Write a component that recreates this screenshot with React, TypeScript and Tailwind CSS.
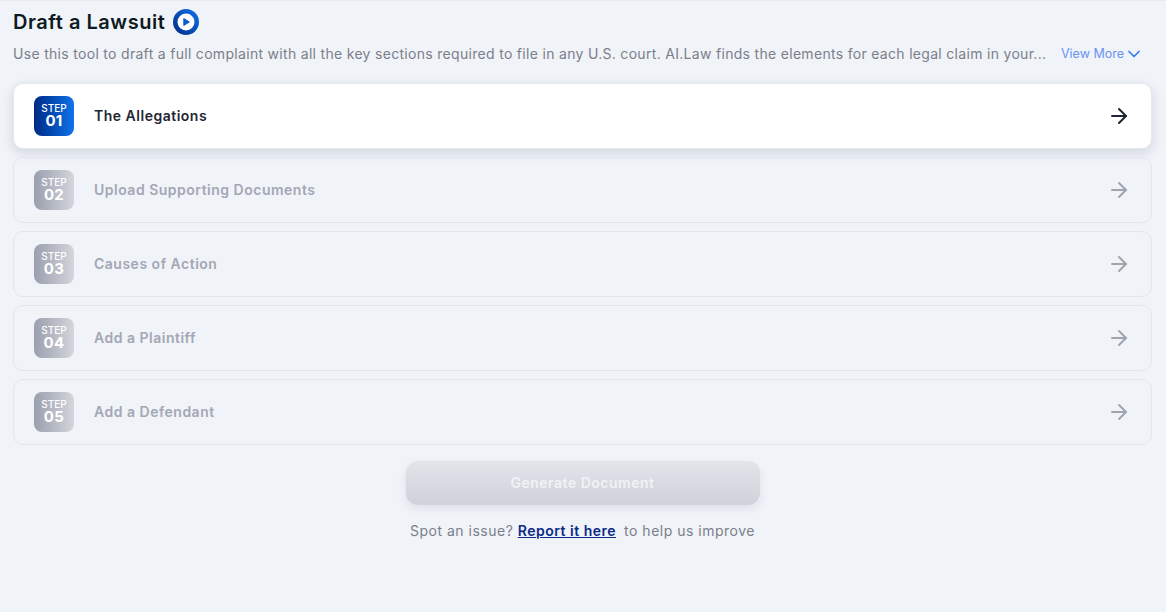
import { ArrowRight, ChevronDown } from 'lucide-react';

const steps = [
  { num: '01', title: 'The Allegations' },
  { num: '02', title: 'Upload Supporting Documents' },
  { num: '03', title: 'Causes of Action' },
  { num: '04', title: 'Add a Plaintiff' },
  { num: '05', title: 'Add a Defendant' },
];

function PlayIcon() {
  return (
    <svg width="26" height="26" viewBox="0 0 26 26">
      <defs>
        <linearGradient id="playRing" x1="0" y1="1" x2="1" y2="0">
          <stop offset="0" stopColor="#002a86" />
          <stop offset="1" stopColor="#1273eb" />
        </linearGradient>
      </defs>
      <circle cx="13" cy="13" r="13" fill="url(#playRing)" />
      <circle cx="13" cy="13" r="8.5" fill="#fff" />
      <path d="M10.8 9.6 L16.4 13 L10.8 16.4 Z" fill="#0b5bd3" stroke="#0b5bd3" strokeWidth="1" strokeLinejoin="round" />
    </svg>
  );
}

function StepCard({ num, title, active }: { num: string; title: string; active: boolean }) {
  return (
    <div
      className={`flex h-[66px] items-center rounded-[10px] border pl-5 pr-5 ${
        active
          ? 'border-[#e4e8f0] bg-white shadow-[0_4px_12px_rgba(30,40,70,0.14)]'
          : 'border-[#e2e6ee]'
      }`}
    >
      <div
        className={`flex h-10 w-10 flex-col items-center rounded-lg pt-[7px] text-white ${
          active
            ? 'bg-gradient-to-r from-[#002a86] to-[#1273eb]'
            : 'bg-gradient-to-r from-[#9b9fae] to-[#d3d6dc]'
        }`}
      >
        <span className="text-[10px] leading-[10px] font-medium">STEP</span>
        <span className="text-[15px] leading-[15px] font-bold tracking-[0.3px]">{num}</span>
      </div>
      <span className={`ml-5 flex-1 text-sm font-semibold tracking-[0.5px] ${active ? 'text-[#1f2633]' : 'text-[#a3a7b5]'}`}>
        {title}
      </span>
      <ArrowRight size={24} strokeWidth={2} className={active ? 'text-[#1f2633]' : 'text-[#a0a4b1]'} />
    </div>
  );
}

export default function App() {
  return (
    <div className="h-[612px] overflow-hidden border-t border-[#e6e9ef] bg-[#f0f3f8] pl-[13px] pr-[14px] font-['Inter',sans-serif]">
      {/* Header */}
      <div className="flex h-[42px] items-center gap-2">
        <h1 className="text-xl font-semibold tracking-[0.52px] text-[#0e1a22]">Draft a Lawsuit</h1>
        <PlayIcon />
      </div>
      <div className="flex h-[22px] items-center justify-between pr-2">
        <p className="whitespace-nowrap text-sm tracking-[0.305px] text-[#7b7f8b]">
          Use this tool to draft a full complaint with all the key sections required to file in any U.S. court. AI.Law finds the elements for each legal claim in your...
        </p>
        <button className="flex items-center whitespace-nowrap text-[12.5px] text-[#6b93f5]">
          View More
          <ChevronDown size={20} strokeWidth={2} className="text-[#2f7bf0]" />
        </button>
      </div>

      {/* Steps */}
      <div className="mt-[18px] flex flex-col gap-2">
        {steps.map((s, i) => (
          <StepCard key={s.num} num={s.num} title={s.title} active={i === 0} />
        ))}
      </div>

      {/* Footer */}
      <div className="mt-4 flex flex-col items-center">
        <button className="h-11 w-[354px] rounded-xl bg-gradient-to-b from-[#e2e4ea] to-[#cfd2da] text-sm font-semibold tracking-[0.5px] text-[#f0f2f7] shadow-[0_4px_10px_rgba(30,40,70,0.08)]">
          Generate Document
        </button>
        <p className="mt-4 text-sm tracking-[0.5px] text-[#7b7f8b]">
          Spot an issue?{' '}
          <a className="font-semibold text-[#0b2a86] underline">Report it here</a>
          <span className="ml-2">to help us improve</span>
        </p>
      </div>
    </div>
  );
}
